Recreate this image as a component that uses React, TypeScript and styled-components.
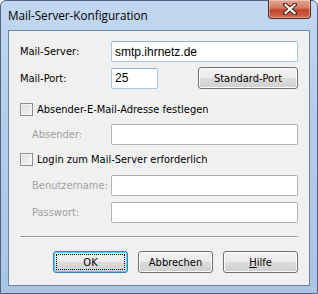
import React from "react";
import styled, { createGlobalStyle } from "styled-components";

const GlobalStyle = createGlobalStyle`
  html, body {
    margin: 0;
    padding: 0;
    background: #ffffff;
  }
`;

const Frame = styled.div`
  width: 318px;
  height: 294px;
  box-sizing: border-box;
  border: 1px solid #4d6385;
  border-radius: 6px 6px 0 0;
  background: linear-gradient(180deg, #c2d8f0 0%, #b5cde9 40%, #a9c5e6 100%);
  padding: 0 7px 7px 7px;
  display: flex;
  flex-direction: column;
  position: relative;
  font-family: "DejaVu Sans Condensed", "DejaVu Sans", sans-serif;
`;

const TitleBar = styled.div`
  height: 29px;
  display: flex;
  align-items: center;
`;

const Title = styled.span`
  font-family: "Open Sans", "Noto Sans", sans-serif;
  font-size: 11.7px;
  color: #000;
  margin-top: -2px;
`;

const CloseButton = styled.div`
  position: absolute;
  top: -1px;
  right: 6px;
  width: 43px;
  height: 19px;
  box-sizing: border-box;
  border: 1px solid #5a2a2a;
  border-top: none;
  border-radius: 0 0 4px 4px;
  background: linear-gradient(180deg, #e3a593 0%, #d27861 45%, #c04326 55%, #d2695a 100%);
  display: flex;
  align-items: center;
  justify-content: center;
  box-shadow: inset 0 0 0 1px rgba(255, 255, 255, 0.35);
`;

const Client = styled.div`
  flex: 1;
  border: 1px solid #6a84a8;
  background: #f0f0f0;
  padding: 10px 11px 0 11px;
  display: flex;
  flex-direction: column;
  font-size: 11px;
  color: #000;
`;

const Row = styled.div<{ $top?: number }>`
  display: grid;
  grid-template-columns: 91px 1fr;
  align-items: center;
  margin-top: ${(p) => p.$top ?? 0}px;
`;

const Label = styled.span<{ $disabled?: boolean; $indent?: boolean }>`
  color: ${(p) => (p.$disabled ? "#a0a0a0" : "#000")};
  padding-left: ${(p) => (p.$indent ? 12 : 0)}px;
  white-space: nowrap;
`;

const Input = styled.div<{ $width?: number; $focus?: boolean }>`
  box-sizing: border-box;
  height: 21px;
  width: ${(p) => (p.$width ? `${p.$width}px` : "100%")};
  background: #fff;
  border: 1px solid ${(p) => (p.$focus ? "#a8c6e4" : "#b5b5b5")};
  border-top-color: ${(p) => (p.$focus ? "#8fb2d6" : "#abadb3")};
  border-radius: 2px;
  padding: 0 3px;
  display: flex;
  align-items: center;
  font-size: 12px;
  font-family: "Liberation Sans", Arial, sans-serif;
`;

const PortCell = styled.div`
  display: flex;
  align-items: center;
  justify-content: space-between;
`;

const CheckRow = styled.label<{ $top: number }>`
  display: flex;
  align-items: center;
  gap: 4px;
  margin-top: ${(p) => p.$top}px;
`;

const Box = styled.span`
  width: 13px;
  height: 13px;
  box-sizing: border-box;
  border: 1px solid #8e8f8f;
  background: linear-gradient(135deg, #dcdcdc 0%, #f6f6f6 100%);
  box-shadow: inset 0 0 0 1px #f4f4f4;
`;

const Separator = styled.div`
  height: 0;
  border-top: 1px solid #a0a0a0;
  border-bottom: 1px solid #ffffff;
  margin-top: 13px;
`;

const ButtonBar = styled.div`
  display: flex;
  justify-content: flex-end;
  gap: 10px;
  margin-top: 13px;
`;

const Button = styled.div<{ $width: number; $default?: boolean }>`
  box-sizing: border-box;
  width: ${(p) => p.$width}px;
  height: 22px;
  border: 1px solid ${(p) => (p.$default ? "#3c7fb1" : "#707070")};
  border-radius: 3px;
  background: linear-gradient(180deg, #f2f2f2 0%, #ebebeb 49%, #dddddd 50%, #cfcfcf 100%);
  box-shadow: ${(p) => (p.$default ? "inset 0 0 0 1px #48d8fb" : "inset 0 0 0 1px #fcfcfc")};
  display: flex;
  align-items: center;
  justify-content: center;
  font-size: 11px;
  color: #000;
  position: relative;
`;

const FocusRing = styled.span`
  position: absolute;
  inset: 2px;
  border: 1px dotted #000;
`;

const Mnemonic = styled.span`
  text-decoration: underline;
`;

export default function App() {
  return (
    <>
      <GlobalStyle />
      <Frame>
        <TitleBar>
          <Title>Mail-Server-Konfiguration</Title>
        </TitleBar>
        <CloseButton>
          <svg width="14" height="12" viewBox="0 0 14 12">
            <path
              d="M2 1.5 L12 10.5 M12 1.5 L2 10.5"
              stroke="#4a2020"
              strokeWidth="4"
              strokeLinecap="square"
            />
            <path
              d="M2.5 2 L11.5 10 M11.5 2 L2.5 10"
              stroke="#ffffff"
              strokeWidth="2.2"
              strokeLinecap="square"
            />
          </svg>
        </CloseButton>
        <Client>
          <Row>
            <Label>Mail-Server:</Label>
            <Input $focus>smtp.ihrnetz.de</Input>
          </Row>
          <Row $top={5}>
            <Label>Mail-Port:</Label>
            <PortCell>
              <Input $width={47} $focus>25</Input>
              <Button $width={100}>Standard-Port</Button>
            </PortCell>
          </Row>
          <CheckRow $top={14}>
            <Box />
            <span>Absender-E-Mail-Adresse festlegen</span>
          </CheckRow>
          <Row $top={8}>
            <Label $disabled $indent>Absender:</Label>
            <Input />
          </Row>
          <CheckRow $top={8}>
            <Box />
            <span>Login zum Mail-Server erforderlich</span>
          </CheckRow>
          <Row $top={9}>
            <Label $disabled $indent>Benutzername:</Label>
            <Input />
          </Row>
          <Row $top={6}>
            <Label $disabled $indent>Passwort:</Label>
            <Input />
          </Row>
          <Separator />
          <ButtonBar>
            <Button $width={75} $default>
              <FocusRing />
              OK
            </Button>
            <Button $width={75}>Abbrechen</Button>
            <Button $width={75}>
              <span>
                <Mnemonic>H</Mnemonic>ilfe
              </span>
            </Button>
          </ButtonBar>
        </Client>
      </Frame>
    </>
  );
}
